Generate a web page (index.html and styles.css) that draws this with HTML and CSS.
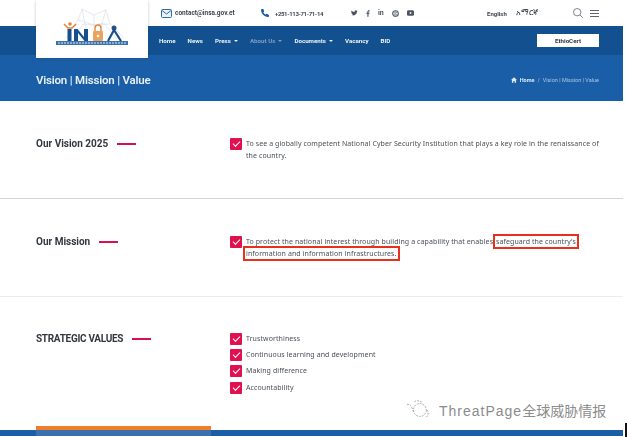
FILE: index.html
```html
<!DOCTYPE html>
<html lang="en">
<head>
<meta charset="utf-8">
<title>Vision | Mission | Value</title>
<link rel="stylesheet" href="styles.css">
</head>
<body>
<div class="page">
  <header class="topbar">
    <div class="contact mail">
      <svg class="ic-mail" viewBox="0 0 11 9" width="11" height="9"><rect x=".5" y=".5" width="10" height="8" rx="1" fill="#eaf1f8" stroke="#2f6bab"/><path d="M1 1.500 5.500 5 10 1.500" fill="none" stroke="#2f6bab"/></svg>
      <span>contact@insa.gov.et</span>
    </div>
    <div class="contact phone">
      <svg viewBox="0 0 10 10" width="8" height="8"><path d="M1 0 3 0 4 3 3 4C3.500 5.500 4.500 6.500 6 7L7 6 10 7.500 10 9.500C10 10 9 10 8.500 10 4 9.500 .5 6 0 1.500 0 1 .5 0 1 0Z" fill="#1d5c9f"/></svg>
      <span>+251-113-71-71-14</span>
    </div>
    <div class="social">
      <svg viewBox="0 0 10 8" width="7" height="6"><path d="M0 7C3 8.500 8.500 7 8.700 2L10 .8 8.600 1C8 0 6 -.3 5.200 1.200L5 2.500C3 2.500 1.500 1.500.6.4 0 2 .5 3 1.300 3.700L.5 3.500C.6 4.700 1.300 5.300 2.400 5.600L1.500 5.700C1.800 6.300 2.400 6.700 3.200 6.700 2.300 7.200 1 7.200 0 7Z" fill="#4a5561"/></svg>
      <svg viewBox="0 0 6 10" width="4" height="7"><path d="M2 10V5.500H.5V3.800H2V2.500C2 1 3 0 4.200 0H5.600V1.700H4.600C4 1.700 3.800 2 3.800 2.500V3.800H5.500L5.200 5.500H3.800V10Z" fill="#4a5561"/></svg>
      <span class="in">in</span>
      <svg viewBox="0 0 10 10" width="7" height="7"><circle cx="5" cy="5" r="4" fill="none" stroke="#4a5561" stroke-width="1.600"/><path d="M3 3.500C4 2.500 7 3 6.500 4 5.500 5 3 5 3.500 6.200 4 7 6.500 7 7 6.200" fill="none" stroke="#4a5561"/></svg>
      <svg viewBox="0 0 10 8" width="7" height="6"><rect width="10" height="8" rx="2" fill="#4a5561"/><path d="M4 2.200 7 4 4 5.800Z" fill="#fff"/></svg>
    </div>
    <div class="langs">
      <span class="lang-en">English</span>
      <span class="lang-am">አማርኛ</span>
    </div>
    <div class="tools">
      <svg viewBox="0 0 10 10" width="10" height="10"><circle cx="4.200" cy="4.200" r="3.700" fill="none" stroke="#6d7680" stroke-width=".9"/><path d="M7 7 9.800 9.800" stroke="#6d7680" stroke-width=".9"/></svg>
      <span class="burger"><i></i><i></i><i></i></span>
    </div>
  </header>

  <nav class="navbar">
    <a class="nav-link">Home</a>
    <a class="nav-link">News</a>
    <a class="nav-link caret">Press</a>
    <a class="nav-link caret muted">About Us</a>
    <a class="nav-link caret">Documents</a>
    <a class="nav-link">Vacancy</a>
    <a class="nav-link">BID</a>
    <a class="nav-btn">EthioCert</a>
  </nav>

  <div class="titleband">
    <h1>Vision | Mission | Value</h1>
    <div class="crumbs">
      <svg viewBox="0 0 10 9" width="6" height="6"><path d="M5 0 10 4.500H8.500V9H6V6H4V9H1.500V4.500H0Z" fill="#dbe7f3"/></svg>
      <b>Home</b><span class="sep">/</span><span>Vision | Mission | Value</span>
    </div>
  </div>

  <a class="logo">
    <svg viewBox="0 0 112 58" width="112" height="58">
      <g fill="none" stroke="#d5dae6" stroke-width=".6">
        <path d="M30 38 42 20 46 9 58 15 70 10 74 24 88 38"/>
        <path d="M38 38 47 24 58 25 68 23 80 38"/>
        <path d="M46 9 52 38M58 15 58 28M70 10 64 30M42 20 58 25 74 24"/>
      </g>
      <path d="M28 24 32 28H36L40 24" fill="none" stroke="#e8843a" stroke-width="1.500"/>
      <circle cx="34" cy="24" r="1.800" fill="#e8843a"/>
      <rect x="31.500" y="29" width="4" height="12" fill="#174f8e"/>
      <path d="M38 41V29H41.500L48 37V29H52V41H48.500L42 33V41Z" fill="#174f8e"/>
      <rect x="57" y="31" width="10" height="10" rx="1" fill="#eba45f"/>
      <path d="M59 31V28A3 3 0 0 1 65 28V31" fill="none" stroke="#e8843a" stroke-width="1.400"/>
      <circle cx="62" cy="36" r="1.200" fill="#fff"/>
      <circle cx="78" cy="28" r="2.500" fill="#274f7d"/>
      <path d="M78 30 72 41M78 30 85 41" stroke="#174f8e" stroke-width="2.200" fill="none"/>
      <rect x="20" y="41" width="72" height="4" fill="#3a72af"/>
      <path d="M22 43H90" stroke="#dfe9f4" stroke-width="1.200" stroke-dasharray="2 1"/>
    </svg>
  </a>

  <main>
    <section class="row row-a">
      <h2 class="heading">Our Vision 2025</h2>
      <ul class="checks">
        <li><span class="tick"></span><p>To see a globally competent National Cyber Security Institution that plays a key role in the renaissance of the country.</p></li>
      </ul>
    </section>
    <section class="row row-b">
      <h2 class="heading">Our Mission</h2>
      <ul class="checks">
        <li><span class="tick"></span><p>To protect the national interest through building a capability that enables <span class="mark">safeguard the country's</span> <span class="mark mark-second">information and information infrastructures.</span></p></li>
      </ul>
    </section>
    <section class="row row-c">
      <h2 class="heading heading-caps">STRATEGIC VALUES</h2>
      <ul class="checks tight">
        <li><span class="tick"></span><p>Trustworthiness</p></li>
        <li><span class="tick"></span><p>Continuous learning and development</p></li>
        <li><span class="tick"></span><p>Making difference</p></li>
        <li><span class="tick"></span><p>Accountability</p></li>
      </ul>
    </section>
  </main>

  <footer class="footer"><div class="footer-tab"></div></footer>
</div>

<div class="watermark">
  <svg viewBox="0 0 30 24" width="28" height="22"><g fill="none" stroke="#9a9a9a" stroke-width=".9" stroke-dasharray="2 1.200"><path d="M3 6C6 5 9 9 10 14"/><circle cx="17" cy="12" r="7"/><path d="M11 3C13 1 18 2 20 4M25 12C27 15 26 18 24 20"/></g></svg>
  <span><span class="wm-latin">ThreatPage</span>全球威胁情报</span>
</div>
<div class="edge"></div>
</body>
</html>
```
FILE: styles.css
```css
* { box-sizing: border-box; }
html, body { margin: 0; padding: 0; background: #fff; }
body {
  width: 627px;
  height: 437px;
  overflow: hidden;
  position: relative;
  font-family: "Noto Sans", "Liberation Sans", sans-serif;
  color: #3c4148;
}
.page { width: 623px; height: 437px; position: relative; overflow: hidden; filter: blur(.3px); }

.topbar {
  height: 26px;
  display: flex;
  align-items: center;
  padding-left: 161px;
  font-family: Roboto, "Noto Sans", sans-serif;
  font-size: 6px;
  font-weight: 700;
  color: #3f4750;
}
.contact { display: flex; align-items: center; gap: 3px; }
.mail { width: 100px; font-size: 6.500px; }
.phone { width: 90px; gap: 6px; letter-spacing: -.35px; }
.social { width: 136px; display: flex; align-items: center; gap: 8px; }
.social .in { font-size: 7px; color: #4a5561; line-height: 1; }
.langs { display: flex; gap: 9px; width: 86px; align-items: center; }
.lang-am { font-family: "DejaVu Sans", "Noto Sans", sans-serif; font-size: 7.500px; font-weight: 400; }
.tools { display: flex; align-items: center; gap: 7px; }
.burger { display: flex; flex-direction: column; gap: 2px; width: 9px; }
.burger i { display: block; height: 1px; background: #5d6670; }

.navbar {
  height: 29px;
  background: #13508f;
  display: flex;
  align-items: center;
  padding-left: 159px;
  font-family: Roboto, "Noto Sans", sans-serif;
  font-size: 6.200px;
  font-weight: 700;
  color: #eaf1f8;
  gap: 12px;
}
.nav-link.caret::after {
  content: "";
  display: inline-block;
  margin-left: 3px;
  vertical-align: 1px;
  border: 2px solid transparent;
  border-top-color: currentColor;
  border-bottom: 0;
}
.nav-link.muted { color: #7d9fc6; }
.nav-btn {
  margin-left: auto;
  margin-right: 24px;
  width: 62px;
  height: 13px;
  background: #fff;
  color: #2e3640;
  display: flex;
  align-items: center;
  justify-content: center;
}

.titleband {
  height: 46px;
  background: #1a5ea8;
  display: flex;
  align-items: center;
  justify-content: space-between;
  padding: 3px 24px 0 36px;
}
.titleband h1 {
  margin: 0;
  font-family: Roboto, "Noto Sans", sans-serif;
  font-size: 11.500px;
  letter-spacing: -.2px;
  font-weight: 600;
  color: #e6eff8;
}
.crumbs {
  display: flex;
  align-items: center;
  gap: 3px;
  font-family: Roboto, "Noto Sans", sans-serif;
  font-size: 5.500px;
  color: #a9c5e2;
}
.crumbs b { color: #dbe7f3; }

.logo {
  position: absolute;
  left: 36px;
  top: 0;
  width: 112px;
  height: 58px;
  background: #fff;
  box-shadow: 0 1px 3px rgba(40, 70, 110, .3);
  display: block;
}
.logo svg { display: block; }

.row {
  display: grid;
  grid-template-columns: 194px 1fr;
  align-items: start;
  padding-left: 36px;
  padding-right: 24px;
}
.row-a { height: 98px; padding-top: 35px; border-bottom: 1px solid #d4d4d4; }
.row-b { height: 98px; padding-top: 35px; border-bottom: 1px solid #ececec; }
.row-c { height: 133px; padding-top: 35px; }

.heading {
  margin: 1px 0 0;
  font-family: Roboto, "Noto Sans", sans-serif;
  font-size: 10px;
  font-weight: 700;
  line-height: 14px;
  color: #33383f;
  display: flex;
  align-items: center;
  gap: 9px;
}
.heading-caps { margin-top: 0; letter-spacing: -.3px; }
.heading::after { content: ""; width: 19px; height: 2px; background: #d5124f; }

.checks { list-style: none; margin: 2px 0 0; padding: 0; }
.checks li { display: flex; gap: 4px; }
.checks p {
  margin: 0;
  font-size: 7px;
  line-height: 12px;
  letter-spacing: .09px;
  color: #4a4f56;
}
.checks.tight { margin-top: 1px; display: flex; flex-direction: column; gap: 4.200px; }
.tick {
  flex: none;
  width: 12px;
  height: 12px;
  background: #e0114f;
  border-radius: 1px;
  position: relative;
}
.tick::after {
  content: "";
  position: absolute;
  left: 3px;
  top: 3px;
  width: 6px;
  height: 3px;
  border-left: 1.600px solid #fff;
  border-bottom: 1.600px solid #fff;
  transform: rotate(-45deg);
}
.mark { outline: 2px solid #e8301c; padding: 1px 1px; }
.mark-second { margin-left: -1px; }

.footer { height: 6px; background: #1a5ea8; position: relative; }
.footer-tab {
  position: absolute;
  left: 36px;
  top: -4px;
  width: 175px;
  height: 10px;
  background: #3a70ad;
  border-top: 4px solid #ef7d2a;
}

.watermark {
  position: absolute;
  left: 404px;
  top: 399px;
  display: flex;
  align-items: center;
  gap: 7px;
  font-family: "Noto Sans CJK SC", "Noto Sans", sans-serif;
  font-size: 14px;
  color: #8b8b8b;
  white-space: nowrap;
}
.wm-latin { font-family: "Liberation Sans", sans-serif; letter-spacing: 1px; }
.edge { position: absolute; left: 625px; top: 423px; width: 2px; height: 14px; background: #111; }
```
